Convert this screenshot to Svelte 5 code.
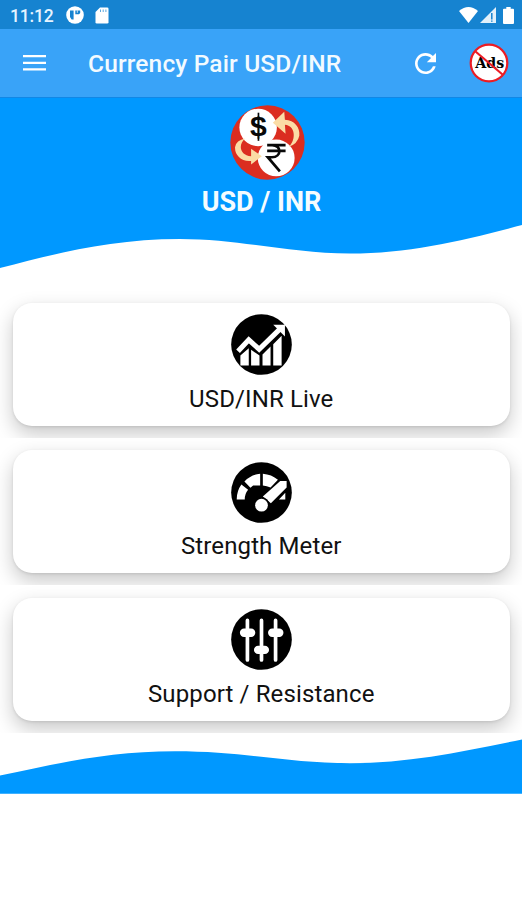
<script>
    const cards = [
      { icon: 'chart', label: 'USD/INR Live' },
      { icon: 'meter', label: 'Strength Meter' },
      { icon: 'sliders', label: 'Support / Resistance' }
    ];
</script>

<div class="screen">
  <div class="status-bar">
    <span class="time">11:12</span>
    <svg class="status-app" width="18" height="18" viewBox="0 0 18 18">
      <circle cx="9" cy="9" r="8.8" fill="#fff" />
      <path d="M4 4.400h3.600v9.200H5.600L4 11zM9.300 4.400h4.900v2.600l-1.200 1.300H9.300z" fill="#1683d0" />
      <path d="M11.300 4.400v2.400" stroke="#fff" stroke-width=".8" />
    </svg>
    <svg width="14" height="17" viewBox="0 0 14 17">
      <path d="M5 .5h7.200q1.300 0 1.300 1.300v13.400q0 1.300-1.300 1.300H1.800Q.5 16.500.5 15.200V5z" fill="#fff" />
      <path d="M5.500 2.500v2.500M8.200 2.500v2.500M10.900 2.500v2.500" stroke="#1683d0" stroke-width=".7" />
    </svg>
    <div class="signals">
      <svg width="19" height="16" viewBox="0 0 19 16">
        <path d="M0 4Q9.500-4 19 4L9.500 16z" fill="#fff" />
      </svg>
      <svg class="cell" width="16" height="16" viewBox="0 0 16 16">
        <path d="M0 16 16 0v16z" fill="#fff" opacity=".88" />
        <path d="M11.800 6v6.500M11.800 13.500v1.200" stroke="#1683d0" stroke-width="1.500" />
      </svg>
      <svg width="11" height="17" viewBox="0 0 11 17">
        <path d="M3.300 0h4.400v1.700H10q1 0 1 1V16q0 1-1 1H1q-1 0-1-1V2.700q0-1 1-1h2.300z" fill="#fff" />
      </svg>
    </div>
  </div>

  <div class="toolbar">
    <svg class="menu" width="23" height="16" viewBox="0 0 23 16">
      <path d="M0 1.200h23M0 7.800h23M0 14.400h23" stroke="#fff" stroke-width="2.300" />
    </svg>
    <h1>Currency Pair USD/INR</h1>
    <svg class="refresh" width="21" height="21" viewBox="4 4 16 16">
      <path d="M17.650 6.350C16.200 4.900 14.210 4 12 4c-4.420 0-7.990 3.580-7.990 8s3.570 8 7.990 8c3.730 0 6.840-2.550 7.730-6h-2.080c-.82 2.330-3.040 4-5.650 4-3.310 0-6-2.690-6-6s2.690-6 6-6c1.660 0 3.140.69 4.220 1.780L13 11h7V4l-2.350 2.350z" fill="#fff" />
    </svg>
    <svg class="no-ads" width="40" height="40" viewBox="0 0 40 40">
      <circle cx="20" cy="20" r="18.300" fill="#fff" stroke="#ec1c24" stroke-width="2.200" />
      <text x="20.800" y="24.800" textLength="29" lengthAdjust="spacingAndGlyphs">Ads</text>
      <path d="M6.500 8.500 33.500 31.500" stroke="#ec1c24" stroke-width="2.200" />
    </svg>
  </div>

  <header>
    <svg class="wave" width="522" height="171" viewBox="0 97 522 171">
      <path d="M0 97H522V225C465 240 410 253.500 350 253.500C290 253.500 240 239 180 239C110 239 55 254 0 268z" fill="#0098ff" />
      <path d="M0 97.500H522" stroke="#1187e6" />
    </svg>
    <svg class="logo" width="75" height="75" viewBox="92 31 224 224">
      <circle cx="204" cy="143" r="111" fill="#db2d20" />
      <circle cx="176" cy="98" r="56" fill="#fff" />
      <circle cx="230" cy="189" r="55" fill="#fff" />
      <path d="M220 84 254 51 256 75C285 76 302 99 299 123Q294 147 268 156C290 134 288 93 256 90L258 117z" fill="#fbdca5" />
      <path d="M187 184 155 209V198C126 201 106 181 107 157Q110 136 138 131C115 148 121 182 155 184V162z" fill="#fbdca5" />
      <text class="dollar" x="177" y="123" textLength="50" lengthAdjust="spacingAndGlyphs">$</text>
      <path d="M177 54V138" stroke="#080808" stroke-width="5" />
      <path d="M203 151H258M203 168H258M204 151H218C247 151 247 187 217 187H205L241 229" fill="none" stroke="#080808" stroke-width="8" />
    </svg>
    <h2>USD / INR</h2>
  </header>

  <main>
    {#each cards as card}
      <div class="card-wrap">
        <button class="card">
          <svg width="61" height="61" viewBox="33 27 182 182">
            <circle cx="124" cy="118" r="90.500" fill="#000" />
            {#if card.icon === 'chart'}
              <path d="M61 151 86 129V181H61zM93 134 118 151V181H93zM127 148 151 124V181H127zM159 117 184 92V181H159z" fill="#fff" />
              <path d="M55 138 86 105 117 133 178 74" fill="none" stroke="#000" stroke-width="22" />
              <path d="M54 138 86 104 117 132 181 70" fill="none" stroke="#fff" stroke-width="15" />
              <path d="M159 59H194V94z" fill="#fff" />
            {:else if card.icon === 'meter'}
              <path d="M50 139Q50 113 64 94L84 110Q74 122 74 139zM73 85Q92 65 120 62V97H99L91 104zM128 62Q154 64 173 80L151 103Q140 98 128 97zM195 119V139H176z" fill="#fff" />
              <path d="M180 84H199V103L152 150 128 130z" fill="#fff" />
              <circle cx="124" cy="156" r="24" fill="#000" />
              <circle cx="124" cy="156" r="19" fill="#fff" />
            {:else}
              <path d="M82 61V179M124 61V179M166 61V179" stroke="#fff" stroke-width="11" stroke-linecap="round" />
              <path d="M72 98H93M114 149H134M156 98H177" stroke="#fff" stroke-width="25" stroke-linecap="round" />
            {/if}
          </svg>
          <span>{card.label}</span>
        </button>
      </div>
    {/each}
  </main>

  <svg class="wave" width="522" height="61" viewBox="0 733 522 61">
    <path d="M0 775.500C60 763 110 751.300 175 751.300C245 751.300 290 763.200 350 763.200C410 763.200 465 751 522 739.500V793.700H0z" fill="#0098ff" />
  </svg>
</div>

<style>
    :global(body) {
        background-color: #ffffff;
    }

    .screen {
        width: 522px;
        height: 900px;
        overflow: hidden;
        font-family: Roboto, "Liberation Sans", sans-serif;
        background-color: #ffffff;
    }

    svg {
        display: block;
        flex-shrink: 0;
    }

    .status-bar {
        display: flex;
        align-items: center;
        height: 29px;
        box-sizing: border-box;
        padding: 1px 8px 0 10px;
        background-color: #1683d0;
    }

    .time {
        width: 56px;
        padding-top: 1px;
        font-size: 17.5px;
        font-weight: 500;
        letter-spacing: -0.2px;
        color: #e6f4ff;
    }

    .status-app {
        margin-right: 11px;
    }

    .signals {
        display: flex;
        align-items: center;
        margin-left: auto;
    }

    .cell {
        margin: 0 7px 0 2px;
    }

    .toolbar {
        display: flex;
        align-items: center;
        height: 68px;
        box-sizing: border-box;
        padding: 0 13px 0 23px;
        background-color: #39a3f8;
    }

    h1 {
        flex: 1;
        margin: 2px 0 0 42px;
        font-size: 24.5px;
        font-weight: 500;
        line-height: 30px;
        letter-spacing: 0.15px;
        white-space: nowrap;
        color: #f2faff;
    }

    .no-ads {
        margin-left: 33px;
    }

    .no-ads text {
        font-family: "DejaVu Serif", serif;
        font-size: 14px;
        font-weight: bold;
        text-anchor: middle;
    }

    header {
        position: relative;
        display: flex;
        flex-direction: column;
        align-items: center;
        height: 193px;
        box-sizing: border-box;
        padding: 8px 0 0 13px;
    }

    header .wave {
        position: absolute;
        top: 0;
        left: 0;
    }

    .logo, h2 {
        position: relative;
    }

    .dollar {
        font-family: "Liberation Sans", sans-serif;
        font-size: 80px;
        font-weight: bold;
        text-anchor: middle;
        fill: #080808;
    }

    h2 {
        margin: 7px 0 0;
        padding-right: 12px;
        font-size: 27px;
        font-weight: 700;
        line-height: 31px;
        color: #f5fcff;
    }

    .card-wrap {
        height: 147.7px;
        box-sizing: border-box;
        padding: 12.5px 12px 12px 12.5px;
        overflow: hidden;
    }

    .card {
        display: flex;
        flex-direction: column;
        align-items: center;
        width: 100%;
        height: 123px;
        padding: 11.5px 0 0;
        border: none;
        border-radius: 19px;
        font-family: inherit;
        color: #111111;
        background-color: #ffffff;
        box-shadow: 0 8px 20px rgba(0, 0, 0, 0.22), 0 1px 3px rgba(0, 0, 0, 0.1);
        cursor: pointer;
    }

    .card span {
        margin-top: 7.500px;
        font-size: 24px;
        font-weight: 400;
        line-height: 32px;
        letter-spacing: 0.12px;
    }
</style>
